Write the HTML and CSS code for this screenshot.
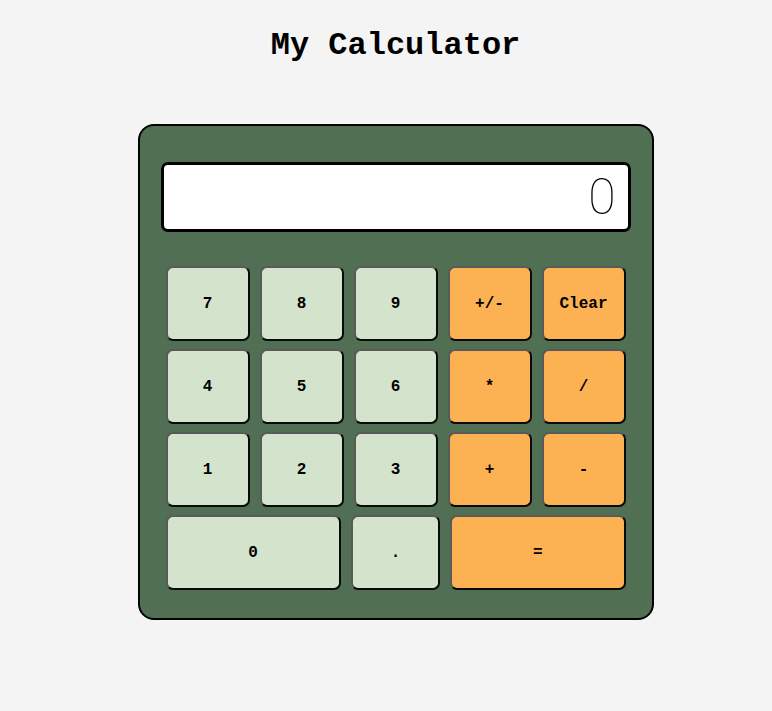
FILE: index.html
```html
<!DOCTYPE html>
<html>
<head>
<meta charset="utf-8">
<link rel="stylesheet" href="styles.css">
</head>
<body>
<main class="page">
  <h1 class="title">My Calculator</h1>
  <div class="calculator">
    <div class="display">0</div>
    <div class="keys">
      <div class="row">
        <button class="key num">7</button>
        <button class="key num">8</button>
        <button class="key num">9</button>
        <button class="key op">+/-</button>
        <button class="key op">Clear</button>
      </div>
      <div class="row">
        <button class="key num">4</button>
        <button class="key num">5</button>
        <button class="key num">6</button>
        <button class="key op">*</button>
        <button class="key op">/</button>
      </div>
      <div class="row">
        <button class="key num">1</button>
        <button class="key num">2</button>
        <button class="key num">3</button>
        <button class="key op">+</button>
        <button class="key op">-</button>
      </div>
      <div class="row">
        <button class="key num wide">0</button>
        <button class="key num">.</button>
        <button class="key op wide">=</button>
      </div>
    </div>
  </div>
</main>
</body>
</html>
```

FILE: styles.css
```css
html, body {
  margin: 0;
  padding: 0;
  background: #f4f4f4;
}
.page {
  display: flex;
  flex-direction: column;
  align-items: center;
  padding: 28px 0 0 19px;
  font-family: "Liberation Mono", "Courier New", monospace;
}
.title {
  margin: 0;
  font-size: 32px;
  font-weight: bold;
  line-height: 36px;
  color: #000;
}
.calculator {
  margin-top: 60px;
  width: 512px;
  box-sizing: content-box;
  background: #506f53;
  border: 2px solid #000;
  border-radius: 16px;
  padding: 36px 0 28px;
  display: flex;
  flex-direction: column;
  align-items: center;
}
.display {
  width: 470px;
  height: 70px;
  box-sizing: border-box;
  background: #fff;
  border: 3px solid #000;
  border-radius: 7px;
  font-family: Roboto, "Liberation Sans", sans-serif;
  font-weight: 100;
  font-size: 50px;
  line-height: 64px;
  text-align: right;
  padding-right: 12px;
  color: #000;
}
.keys {
  margin-top: 34px;
  width: 460px;
  display: flex;
  flex-direction: column;
  gap: 8px;
}
.row {
  display: flex;
  gap: 10px;
}
.key {
  flex: 1 1 0;
  min-width: 0;
  height: 75px;
  box-sizing: border-box;
  border: 2px solid;
  border-color: #5a5a5a #0a0a0a #0a0a0a #5a5a5a;
  border-radius: 7px;
  font-family: "Liberation Mono", "Courier New", monospace;
  font-weight: bold;
  font-size: 16px;
  color: #000;
  padding: 0;
  cursor: pointer;
}
.key.wide {
  flex: 2 1 0;
}
.num {
  background: #d4e4cc;
}
.op {
  background: #fcb153;
}
```
